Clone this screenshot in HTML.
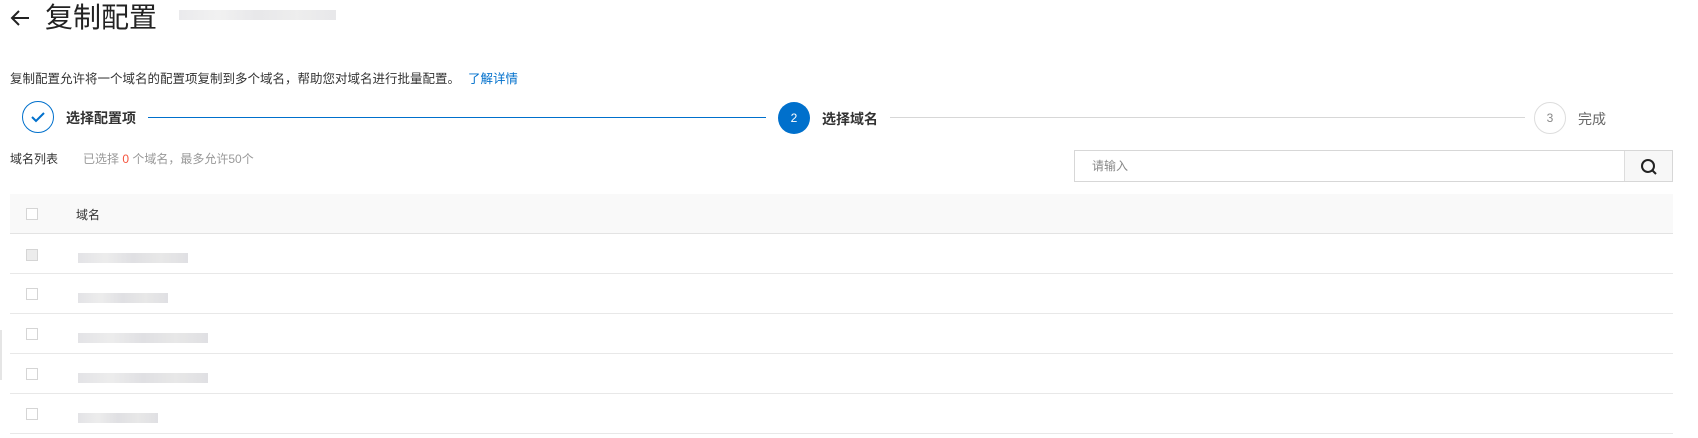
<!DOCTYPE html>
<html><head><meta charset="utf-8"><style>
*{margin:0;padding:0;box-sizing:border-box}
body{width:1698px;height:438px;background:#fff;font-family:"Liberation Sans","Noto Sans CJK SC",sans-serif;color:#333;position:relative;overflow:hidden}
.a{position:absolute}
.blur{position:absolute;height:10px;background:linear-gradient(90deg,#dcdce0,#e8e8e8,#d8d8dc,#e2e2e2,#d8d8dc);opacity:.8}
.cb{position:absolute;left:26px;width:12px;height:12px;border:1px solid #d5d5d5;background:#fff}
.row{position:absolute;left:10px;width:1663px;height:40px;border-bottom:1px solid #e8e8e8}
</style></head><body>
<svg class="a" style="left:10px;top:9px" width="20" height="18" viewBox="0 0 20 18"><path d="M19 9H2M9 2L2 9l7 7" stroke="#222" stroke-width="2" fill="none"/></svg>
<div class="a" style="left:45px;top:1px;font-size:28px;line-height:34px;color:#222">复制配置</div>
<div class="blur" style="left:179px;top:10px;width:157px;opacity:.6"></div>
<div class="a" style="left:10px;top:70px;font-size:12.5px;line-height:18px;color:#333">复制配置允许将一个域名的配置项复制到多个域名，帮助您对域名进行批量配置。<span style="color:#0070cc;margin-left:8px">了解详情</span></div>
<div class="a" style="left:22px;top:101px;width:32px;height:32px;border:1px solid #0070cc;border-radius:50%"></div>
<svg class="a" style="left:29px;top:109px" width="18" height="16"><path d="M3 8l4 4 8-8" stroke="#0070cc" stroke-width="2" fill="none"/></svg>
<div class="a" style="left:66px;top:109px;font-size:14px;font-weight:bold;color:#333;line-height:18px">选择配置项</div>
<div class="a" style="left:148px;top:117px;width:618px;height:1px;background:#0070cc"></div>
<div class="a" style="left:778px;top:102px;width:32px;height:32px;border-radius:50%;background:#0070cc;color:#fff;font-size:12px;line-height:32px;text-align:center">2</div>
<div class="a" style="left:822px;top:110px;font-size:14px;font-weight:bold;color:#333;line-height:18px">选择域名</div>
<div class="a" style="left:890px;top:117px;width:635px;height:1px;background:#d7d7d7"></div>
<div class="a" style="left:1534px;top:102px;width:32px;height:32px;border-radius:50%;border:1px solid #ddd;color:#888;font-size:12px;line-height:30px;text-align:center">3</div>
<div class="a" style="left:1578px;top:110px;font-size:14px;color:#666;line-height:18px">完成</div>
<div class="a" style="left:10px;top:151px;font-size:12px;line-height:16px;color:#333">域名列表</div>
<div class="a" style="left:83px;top:151px;font-size:12px;line-height:16px;color:#999">已选择 <span style="color:#f5533d">0</span> 个域名，最多允许50个</div>
<div class="a" style="left:1074px;top:150px;width:599px;height:32px;border:1px solid #d7d7d7"></div>
<div class="a" style="left:1624px;top:151px;width:48px;height:30px;background:#f7f7f7;border-left:1px solid #ddd"></div>
<svg class="a" style="left:1640px;top:158px" width="18" height="18"><circle cx="8" cy="8" r="6" stroke="#222" stroke-width="2" fill="none"/><path d="M12 12l4 4" stroke="#222" stroke-width="2"/></svg>
<div class="a" style="left:1092px;top:158px;font-size:12px;line-height:16px;color:#888">请输入</div>
<div class="a" style="left:10px;top:194px;width:1663px;height:40px;background:#f9f9f9;border-bottom:1px solid #e3e3e3"></div>
<div class="cb" style="top:208px"></div>
<div class="a" style="left:76px;top:207px;font-size:12px;line-height:16px;color:#333">域名</div>
<div class="row" style="top:234px"></div><div class="cb" style="top:249px;background:#ececec"></div><div class="blur" style="left:78px;top:253px;width:110px"></div>
<div class="row" style="top:274px"></div><div class="cb" style="top:288px"></div><div class="blur" style="left:78px;top:293px;width:90px"></div>
<div class="row" style="top:314px"></div><div class="cb" style="top:328px"></div><div class="blur" style="left:78px;top:333px;width:130px"></div>
<div class="row" style="top:354px"></div><div class="cb" style="top:368px"></div><div class="blur" style="left:78px;top:373px;width:130px"></div>
<div class="row" style="top:394px"></div><div class="cb" style="top:408px"></div><div class="blur" style="left:78px;top:413px;width:80px"></div>
<div class="a" style="left:0;top:330px;width:2px;height:50px;background:#e5e5e5"></div>
</body></html>
